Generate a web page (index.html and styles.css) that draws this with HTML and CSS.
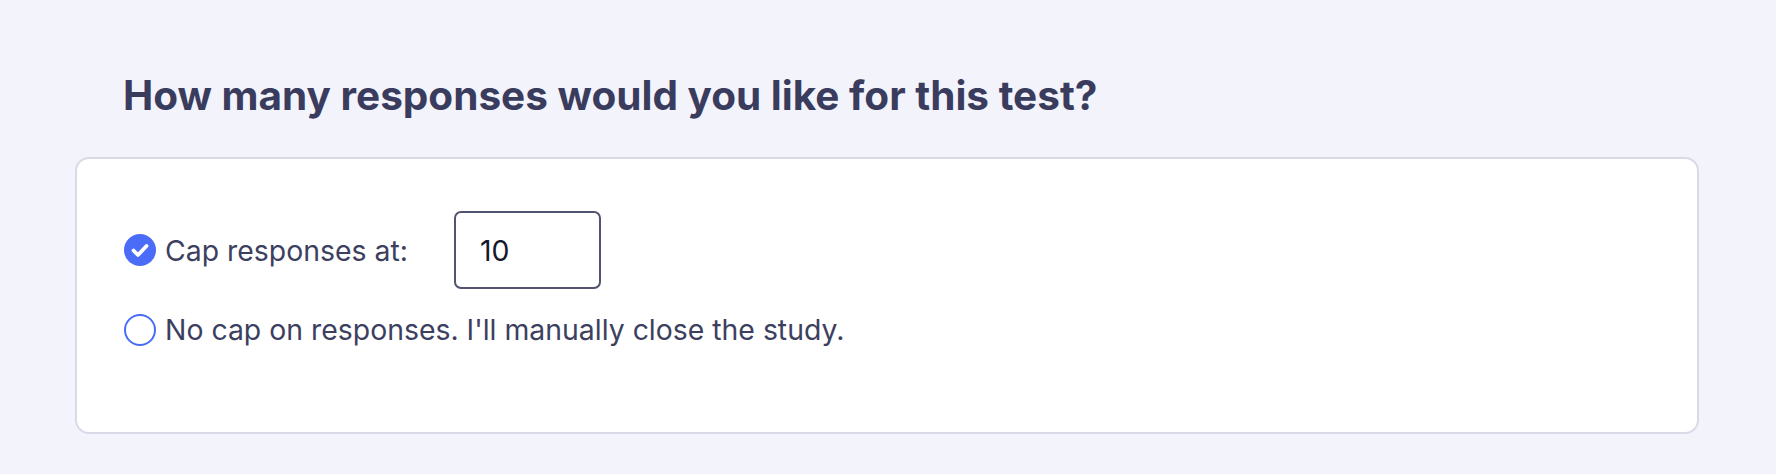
FILE: index.html
```html
<!DOCTYPE html>
<html lang="en">
<head>
  <meta charset="UTF-8" />
  <title>Responses</title>
  <link rel="stylesheet" href="styles.css">
</head>
<body>
  <div class="page">
    <h2 class="title">How many responses would you like for this test?</h2>

    <div class="card">
      <div class="option">
        <span class="radio checked">
          <svg viewBox="0 0 32 32" width="32" height="32">
            <circle cx="16" cy="16" r="16" fill="#4a6cf7" />
            <path d="M9.5 16.5 L14 21 L22.5 12" fill="none" stroke="#ffffff" stroke-width="3.8" stroke-linecap="round" stroke-linejoin="round" />
          </svg>
        </span>
        <label class="option-label">Cap responses at:</label>
        <input type="text" class="cap-input" value="10" />
      </div>
      <div class="option">
        <span class="radio"></span>
        <label class="option-label">No cap on responses. I'll manually close the study.</label>
      </div>
    </div>
  </div>
</body>
</html>
```

FILE: styles.css
```css
body {
  margin: 0;
  background-color: #f3f3fc;
  font-family: 'Inter', 'Liberation Sans', sans-serif;
}
.page {
  padding: 0 77px 0 75px;
}
.title {
  margin: 0;
  padding: 72px 0 0 48px;
  height: 85px;
  font-size: 40.5px;
  line-height: 48px;
  font-weight: 700;
  color: #3a3c5e;
}
.card {
  background-color: #ffffff;
  border: 2px solid #d9dae8;
  border-radius: 14px;
  padding: 52px 48px 85px 47px;
  display: flex;
  flex-direction: column;
  gap: 23px;
}
.option {
  display: flex;
  align-items: center;
}
.radio {
  width: 32px;
  height: 32px;
  box-sizing: border-box;
  border: 2px solid #4a6cf7;
  border-radius: 50%;
  flex-shrink: 0;
}
.radio.checked {
  border: none;
}
.radio svg {
  display: block;
}
.option-label {
  margin-left: 9px;
  font-size: 28.4px;
  color: #3d3f5f;
}
.cap-input {
  margin-left: 46px;
  width: 147px;
  height: 78px;
  box-sizing: border-box;
  border: 2px solid #52546f;
  border-radius: 7px;
  padding: 0 0 0 24px;
  font-family: 'Inter', 'Liberation Sans', sans-serif;
  font-size: 28.4px;
  color: #15172b;
  background-color: #ffffff;
}
```
